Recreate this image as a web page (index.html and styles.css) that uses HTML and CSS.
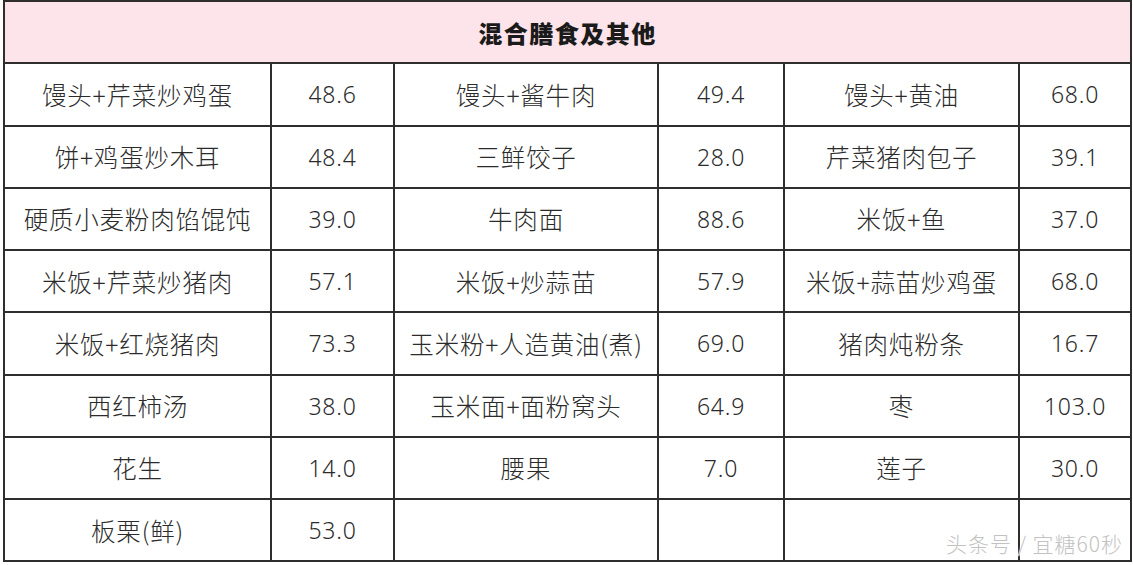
FILE: index.html
```html
<!DOCTYPE html>
<html lang="zh">
<head>
<meta charset="utf-8">
<link rel="stylesheet" href="styles.css">
</head>
<body>
<div class="page">
  <table class="gi">
    <colgroup>
      <col class="c1"><col class="c2"><col class="c3"><col class="c4"><col class="c5"><col class="c6">
    </colgroup>
    <tr class="head"><td colspan="6">混合膳食及其他</td></tr>
    <tr><td>馒头+芹菜炒鸡蛋</td><td class="num">48.6</td><td>馒头+酱牛肉</td><td class="num">49.4</td><td>馒头+黄油</td><td class="num">68.0</td></tr>
    <tr><td>饼+鸡蛋炒木耳</td><td class="num">48.4</td><td>三鲜饺子</td><td class="num">28.0</td><td>芹菜猪肉包子</td><td class="num">39.1</td></tr>
    <tr><td>硬质小麦粉肉馅馄饨</td><td class="num">39.0</td><td>牛肉面</td><td class="num">88.6</td><td>米饭+鱼</td><td class="num">37.0</td></tr>
    <tr><td>米饭+芹菜炒猪肉</td><td class="num">57.1</td><td>米饭+炒蒜苗</td><td class="num">57.9</td><td>米饭+蒜苗炒鸡蛋</td><td class="num">68.0</td></tr>
    <tr><td>米饭+红烧猪肉</td><td class="num">73.3</td><td>玉米粉+人造黄油(煮)</td><td class="num">69.0</td><td>猪肉炖粉条</td><td class="num">16.7</td></tr>
    <tr><td>西红柿汤</td><td class="num">38.0</td><td>玉米面+面粉窝头</td><td class="num">64.9</td><td>枣</td><td class="num">103.0</td></tr>
    <tr><td>花生</td><td class="num">14.0</td><td>腰果</td><td class="num">7.0</td><td>莲子</td><td class="num">30.0</td></tr>
    <tr><td>板栗(鲜)</td><td class="num">53.0</td><td></td><td></td><td></td><td></td></tr>
  </table>
  <div class="mark">头条号 / 宜糖60秒</div>
</div>
</body>
</html>
```

FILE: styles.css
```css
html, body {
  margin: 0;
  padding: 0;
  background: #ffffff;
}

.page {
  position: relative;
  width: 1133px;
  height: 565px;
  overflow: hidden;
}

.gi {
  margin-left: 3px;
  width: 1127px;
  border-collapse: collapse;
  table-layout: fixed;
  font-family: "Noto Sans CJK SC", "Noto Sans", sans-serif;
  color: #2b2b2b;
}

.c1 { width: 267px; }
.c2 { width: 123px; }
.c3 { width: 264px; }
.c4 { width: 126px; }
.c5 { width: 235px; }
.c6 { width: 112px; }

.gi tr {
  height: 62.25px;
}

.gi td {
  border: 2px solid #2e2e2e;
  padding: 0;
  text-align: center;
  vertical-align: middle;
  font-size: 24.5px;
  letter-spacing: 0.8px;
  font-weight: 300;
  white-space: nowrap;
}

.gi td.num {
  font-family: "Noto Sans", "DejaVu Sans", sans-serif;
  font-size: 23px;
  font-weight: 300;
  letter-spacing: 0.8px;
}

.gi tr.head td {
  background: #fde3ea;
  font-weight: 900;
  font-size: 24px;
  letter-spacing: 1.5px;
  color: #1a1a1a;
}

.mark {
  position: absolute;
  left: 946px;
  top: 528px;
  font-family: "Noto Sans CJK SC", sans-serif;
  font-size: 21px;
  font-weight: 300;
  color: #c2c2c2;
  text-shadow: 0 0 2px #ffffff, 0 0 1px #ffffff;
  letter-spacing: 1px;
}
```
